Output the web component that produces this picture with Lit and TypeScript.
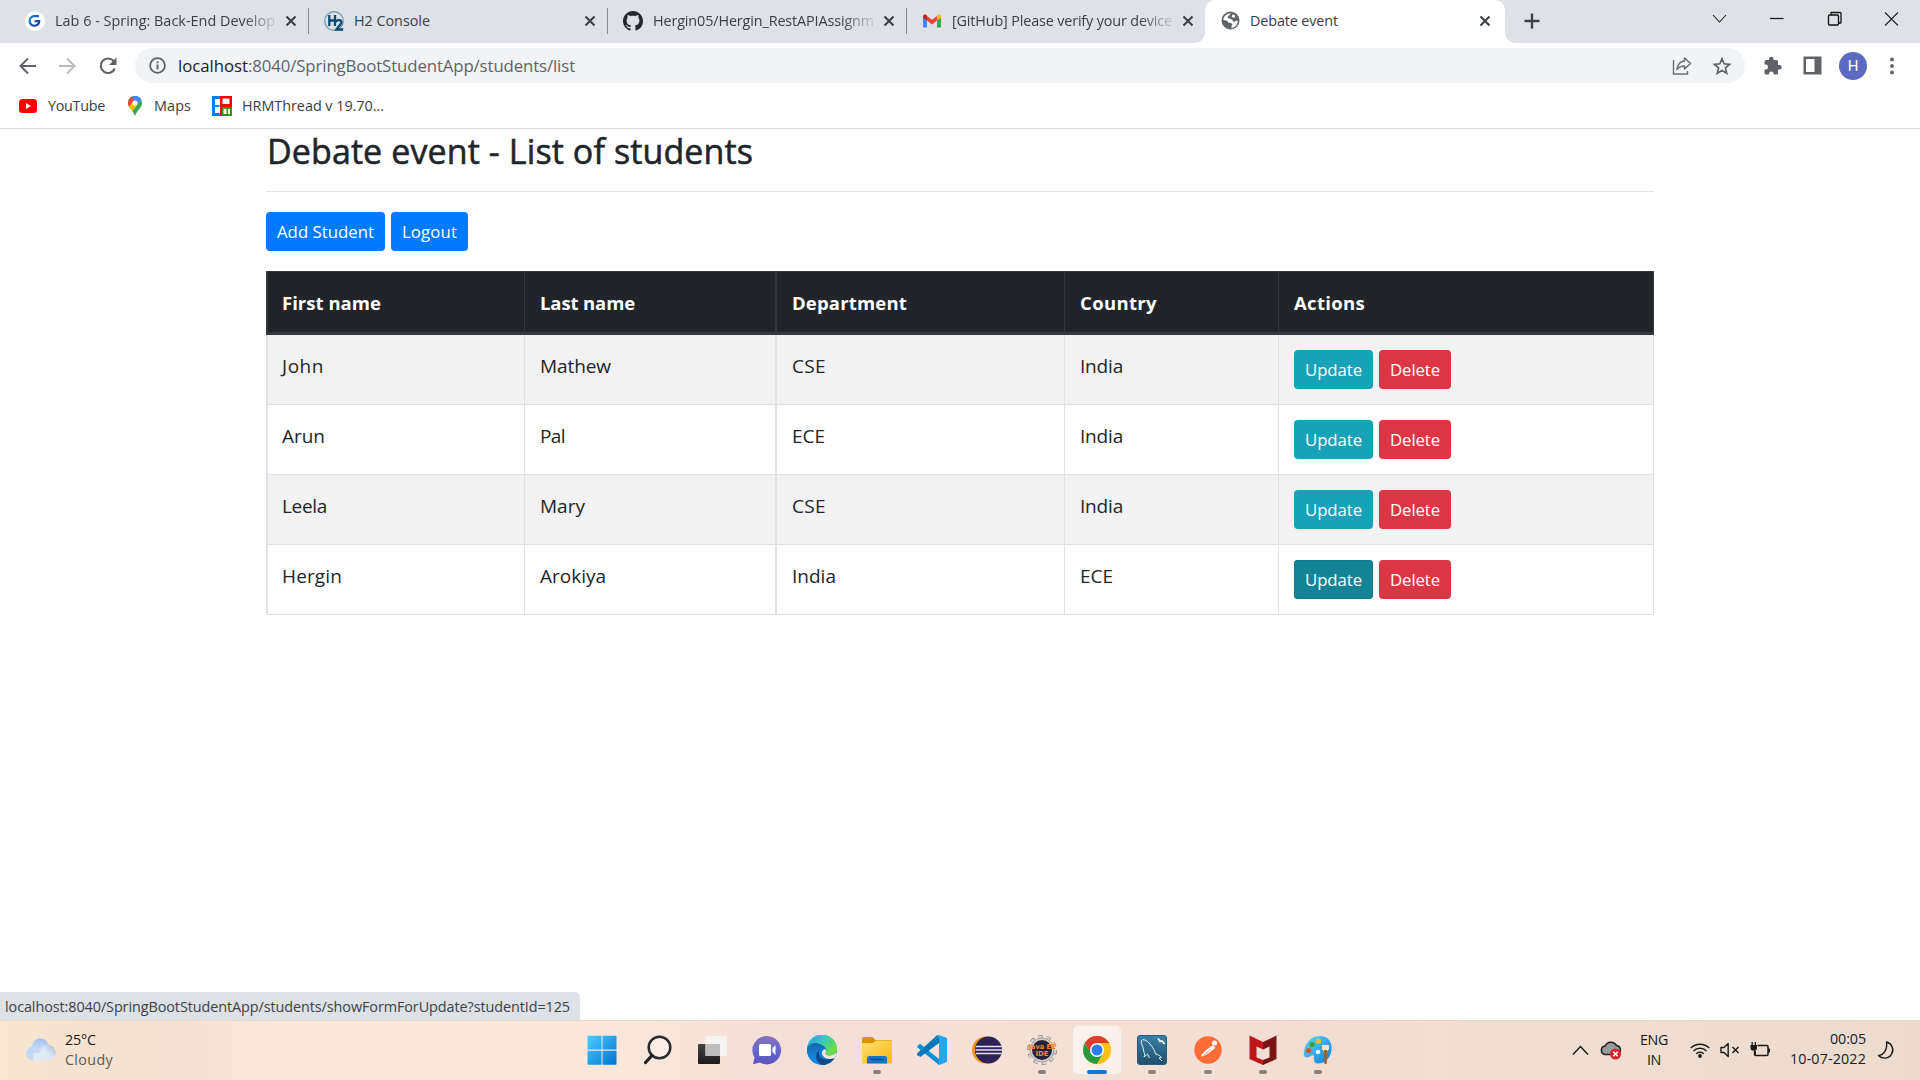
import { LitElement, html, css, svg, TemplateResult } from "lit";
import { customElement, property } from "lit/decorators.js";
import { classMap } from "lit/directives/class-map.js";

/** A single line of text whose tracking is adjusted so that it is `width` px wide. */
@customElement("fit-text")
class FitText extends LitElement {
  @property() text = "";
  @property({ type: Number }) width = 0;

  static styles = css`
    :host { display: inline-block; white-space: pre; }
    .line { display: inline-block; }
  `;

  updated() {
    const line = this.renderRoot.querySelector<HTMLElement>(".line")!;
    line.style.letterSpacing = "0px";
    const natural = line.getBoundingClientRect().width;
    if (this.width && natural) {
      line.style.letterSpacing = `${(this.width - natural) / this.text.length}px`;
    }
  }

  render() {
    return html`<span class="line">${this.text}</span>`;
  }
}

const fit = (text: string, width: number) => html`<fit-text .text=${text} .width=${width}></fit-text>`;

const icon = (w: number, h: number, body: unknown) =>
  html`<svg width=${w} height=${h} viewBox="0 0 ${w} ${h}" fill="none">${body}</svg>`;

const closeIcon = icon(12, 12, svg`<path d="M1.5 1.5l9 9M10.5 1.5l-9 9" stroke="#3c4043" stroke-width="2.1"/>`);

const favicons: Record<string, TemplateResult> = {
  lab: icon(20, 20, svg`<circle cx="10" cy="10" r="10" fill="#fff"/><path d="M14 5.2H10A4.8 4.8 0 1 0 14.2 10.2H9.6" stroke="url(#gl)" stroke-width="2.2"/><defs><linearGradient id="gl" x1="0" y1="0" x2="1" y2="1"><stop stop-color="#1d8be0"/><stop offset="1" stop-color="#1a2f9c"/></linearGradient></defs>`),
  h2: icon(20, 20, svg`<circle cx="10" cy="10" r="9.3" stroke="#6f95ad" stroke-width="1.2"/><path d="M5.3 4v11M11 4v11M5 9.5h6" stroke="#0d4a70" stroke-width="2.3"/><path d="M11.8 11.2c1-3 6-2.600 5.600.4-.3 2-3.400 4-5 6.900h6.800" stroke="#0d4a70" stroke-width="2.300"/>`),
  github: icon(20, 20, svg`<path transform="scale(1.25)" fill="#24292f" d="M8 0C3.580 0 0 3.580 0 8c0 3.540 2.290 6.530 5.470 7.590.4.070.55-.17.55-.38 0-.19-.01-.82-.01-1.490-2.010.37-2.530-.49-2.690-.94-.09-.23-.48-.94-.82-1.130-.28-.15-.68-.52-.01-.53.63-.01 1.080.58 1.230.82.72 1.210 1.870.87 2.330.66.070-.52.28-.87.51-1.070-1.780-.2-3.640-.89-3.640-3.950 0-.87.31-1.590.82-2.150-.08-.2-.36-1.020.08-2.120 0 0 .67-.21 2.200.82.64-.18 1.320-.27 2-.27s1.360.09 2 .27c1.530-1.040 2.200-.82 2.200-.82.44 1.100.16 1.920.08 2.120.51.56.82 1.270.82 2.150 0 3.070-1.870 3.750-3.650 3.950.29.25.54.73.54 1.480 0 1.070-.01 1.930-.01 2.200 0 .21.15.46.55.38A8.010 8.010 0 0 0 16 8c0-4.420-3.580-8-8-8z"/>`),
  gmail: icon(20, 20, svg`<path d="M1 6v10.500h4V9z" fill="#4285f4"/><path d="M19 6v10.500h-4V9z" fill="#34a853"/><path d="M5 9.500V5l5 3.800L15 5v4.500l-5 4z" fill="#ea4335"/><path d="M1 5.500C1 3.400 3.200 3 4.400 4L5 4.500v5L1 6.800z" fill="#c5221f"/><path d="M19 5.500C19 3.400 16.800 3 15.600 4l-.6.5v5l4-2.700z" fill="#fbbc04"/>`),
  globe: icon(19, 19, svg`<circle cx="9.500" cy="9.500" r="9" fill="#5f6368"/><path d="M10.500 2.200c-2 .2-1.200 2.200-3 2.800-1.600.5-1 2.200.5 2.500 1.700.3 3.700.7 3.800 2.400.1 1.200 1.600 1 2.700.2.700-.5 2.200-.3 2.300-.2-.1 3.400-2.800 6.600-6.200 7-.3-1.300-.1-2.200 1-3.300-.4-1.300-2-1.800-3.500-1.800-1.300 0-1.500-2-2.900-2.200L2.300 8.900c.3-3.900 3.900-7.200 8.200-6.700z" fill="#fff"/><path d="M11.500 3.400l2.400.6.300 2.200-2 .6-1.600-1.300z" fill="#fff"/>`),
};

const tabs = [
  { icon: "lab", title: "Lab 6 - Spring: Back-End Develop", width: 220 },
  { icon: "h2", title: "H2 Console", width: 76 },
  { icon: "github", title: "Hergin05/Hergin_RestAPIAssignm", width: 221 },
  { icon: "gmail", title: "[GitHub] Please verify your device", width: 220 },
];

const students = [
  [["John", 42], ["Mathew", 71], ["CSE", 34], ["India", 43]],
  [["Arun", 43], ["Pal", 25], ["ECE", 33], ["India", 43]],
  [["Leela", 45], ["Mary", 45], ["CSE", 34], ["India", 43]],
  [["Hergin", 60], ["Arokiya", 66], ["India", 44], ["ECE", 33]],
] as [string, number][][];

const head: [string, number][] = [
  ["First name", 99], ["Last name", 95], ["Department", 115], ["Country", 77], ["Actions", 71],
];

const apps: { name: string; art: unknown; running?: boolean; active?: boolean }[] = [
  { name: "start", art: svg`<defs><linearGradient id="w" x1="0" y1="0" x2="30" y2="30" gradientUnits="userSpaceOnUse"><stop stop-color="#4fd0ff"/><stop offset="1" stop-color="#0070d0"/></linearGradient></defs><path d="M.5 1.500a.7.7 0 0 1 .7-.7H14.500V14.500H.5zM15.500.8h13.300a.7.7 0 0 1 .7.7v13H15.500zM.5 15.700h14v14H1.200a.7.700 0 0 1-.7-.7zM15.500 15.700h14V29a.7.700 0 0 1-.7.700H15.500z" fill="url(#w)"/>` },
  { name: "search", art: svg`<circle cx="17.500" cy="12.500" r="10.800" stroke="#2a2a2a" stroke-width="2.500" fill="#fff" fill-opacity=".3"/><path d="M10 20.500L3.500 27.500" stroke="#222" stroke-width="3.200" stroke-linecap="round"/>` },
  { name: "task-view", art: svg`<defs><linearGradient id="tv" x1="0" y1="0" x2="0" y2="1"><stop stop-color="#454545"/><stop offset="1" stop-color="#1b1b1b"/></linearGradient></defs><rect x="1" y="9" width="22" height="20" rx="1" fill="url(#tv)"/><rect x="8.500" y="1" width="21.500" height="20" rx="1" fill="#f4f4f4" fill-opacity=".95"/><path d="M8.500 9H23v12H8.500z" fill="#bdbdbd"/>` },
  { name: "chat", art: svg`<defs><linearGradient id="ct" x1="0" y1="0" x2="0" y2="1"><stop stop-color="#8a72b8"/><stop offset=".5" stop-color="#6868cf"/><stop offset="1" stop-color="#5b52c0"/></linearGradient></defs><path d="M15 1A14.200 14.200 0 1 1 7.800 27.500L1 29.200 2.500 22.500A14.200 14.200 0 0 1 15 1z" fill="url(#ct)"/><rect x="7" y="9" width="12" height="12" rx="1.500" fill="#fff"/><path d="M20.500 13l3-3v10l-3-3z" fill="#fff"/>` },
  { name: "edge", art: svg`<defs><linearGradient id="e1" x1="0" y1="0" x2="1" y2=".5"><stop stop-color="#1b9de2"/><stop offset=".5" stop-color="#35c7c9"/><stop offset="1" stop-color="#6be03f"/></linearGradient><linearGradient id="e2" x1="0" y1="0" x2="0" y2="1"><stop stop-color="#1768b0"/><stop offset="1" stop-color="#1592e6"/></linearGradient></defs><circle cx="15" cy="15" r="15" fill="#0d7bd2"/><path d="M.3 12A15 15 0 0 1 30 13c.3 5-3.500 7.700-8 7.400-3-.2-4-1.400-3.200-2.600C21 14 17 9.500 11 9.500 5.500 9.500 1.500 11 .3 12z" fill="url(#e1)"/><path d="M.1 14C1.500 9 7 7 11.500 8.400c3.500 1.100 6 3 6.500 5.600-6-3-8 5-2 9 3 2 7 2.300 11.300.500C24 28.500 19 30.500 13.500 29.800 5 29-.5 21.500.1 14z" fill="url(#e2)"/><path d="M12.300 15.500c-2 6.500 3.500 11.500 14 7.500l1.400-.3C25 27 20 30 15 30 8 27 7.500 18.500 12.300 15.500z" fill="#114a8b"/><path d="M18.800 17.800c-1 1.500 1 2.600 3.200 2.600 3 .1 5-.8 6.300-2.200L30 17l-1.800 5.700c-5 2.300-10 1.300-12.200-1.700-2-2.700-1-6 2-7 .9.800 1.500 2.500.8 3.800z" fill="#f5e3da"/>` },
  { name: "explorer", running: true, art: svg`<defs><linearGradient id="ex" x1="0" y1="0" x2="1" y2="1"><stop stop-color="#ffdf72"/><stop offset="1" stop-color="#f9b90f"/></linearGradient></defs><path d="M0 3.500Q0 2 1.500 2H9.500q1 0 1.800.8L13.500 5H29q1 0 1 1v8H0z" fill="#d99400"/><path d="M0 8h11l3-2.500H29q1 0 1 1V27.500q0 1-1 1H1q-1 0-1-1z" fill="url(#ex)"/><path d="M5 28.500V23.500q0-2.500 2.500-2.500h15q2.500 0 2.500 2.500v5z" fill="#0f75d0"/><path d="M8.500 24.500h13" stroke="#174a85" stroke-width="1.500"/>` },
  { name: "vscode", art: svg`<path d="M22 0.500L3 19.500.6 21 0 19 .5 18 20 .3z" fill="#0877b9"/><path d="M0 11.500L3 8.800 22 24v6L.5 12.500z" fill="#0b8fd6"/><path d="M22 8L3.200 22 .3 19.600 22 1z" fill="#0877b9"/><path d="M22 0l8 3v24l-8 3z" fill="#27a4f2"/>` },
  { name: "eclipse", art: svg`<circle cx="13.500" cy="15" r="13.500" fill="#f7941e"/><circle cx="16.500" cy="15" r="13.500" fill="#2c2255"/><path d="M4 11.500h25.500M3.500 15h26.500M4 18.500h25.500" stroke="#e6e3f0" stroke-width="1.700"/>` },
  { name: "java-ee", running: true, art: svg`<circle cx="15" cy="15" r="13" stroke="#77736f" stroke-width="4" stroke-dasharray="4.100 4.068"/><circle cx="15" cy="15" r="13" stroke="#d6d6d4" stroke-width="3" stroke-dasharray="3.500 4.668"/><circle cx="15" cy="15" r="12" fill="#d0cfce" stroke="#777" stroke-width=".5"/><circle cx="15" cy="15" r="10" fill="#292137"/><text x="15" y="14" class="javatext" textLength="27" lengthAdjust="spacingAndGlyphs">Java EE</text><text x="15" y="20.500" class="javatext">IDE</text>` },
  { name: "chrome", running: true, active: true, art: svg`<g transform="translate(1 1)"><circle cx="14" cy="14" r="14" fill="#fbc116"/><path d="M14 14L1.900 7A14 14 0 0 1 26.100 7z" fill="#e33b2e"/><path d="M14 7h12.100A14 14 0 0 0 1.900 7L8 17.500z" fill="#e33b2e"/><path d="M1.900 7A14 14 0 0 0 14 28l6-10.500H8z" fill="#249a41"/><path d="M26.100 7H14l6 10.500L14 28A14 14 0 0 0 26.100 7z" fill="#fbc116"/><circle cx="14" cy="14" r="7" fill="#fff"/><circle cx="14" cy="14" r="5.500" fill="#2f7bea"/></g>` },
  { name: "mysql", running: true, art: svg`<defs><linearGradient id="my" x1="0" y1="0" x2="0" y2="1"><stop stop-color="#3b7ea6"/><stop offset="1" stop-color="#1f4f6c"/></linearGradient></defs><rect x=".5" y=".5" width="29" height="29" rx="2.500" fill="url(#my)" stroke="#265d7d"/><path d="M7 22c1.500-2 0-4-.5-7C6 11 3.500 8 4.500 5.500c1.500-2 5.500 0 8.500 3.500 3 3.500 5 7 5.500 10 3 .5 5.500 2.500 6 3.500l-2.500.500 3 3M7 22l3.500-3 2 4" stroke="#e3eef5" stroke-width="1"/><path d="M21 3.500l2 3 2-.5 2.500 3" stroke="#fff" stroke-width="1.800"/>` },
  { name: "postman", running: true, art: svg`<circle cx="15" cy="15" r="13.700" fill="#ff6c37"/><circle cx="21.500" cy="8" r="2.600" fill="#fff"/><path d="M20 10.500l2.500 2.300-9 7-4.500 2-1-1 3-4 6.500-5z" fill="#fff"/><path d="M8.500 22.500L18 14" stroke="#ff6c37" stroke-width=".7"/>` },
  { name: "mcafee", running: true, art: svg`<path d="M1.500.5L15 7v7.500l-6.500-3v11L15 25v5L1.500 24z" fill="#c01818"/><path d="M28.500.5L15 7v7.500l6.500-3v11L15 25v5l13.500-6z" fill="#7d1414"/>` },
  { name: "paint", running: true, art: svg`<defs><linearGradient id="pt" x1="0" y1="0" x2="1" y2="1"><stop stop-color="#5ed9fb"/><stop offset="1" stop-color="#0b7ed5"/></linearGradient></defs><path d="M17 1c8 0 12.500 6 11.500 14C27.500 24 20 29.500 14 28.500c-4-.7-2.500-4.500-3-7-.7-2.800-3.300-.5-5.500.5C2 23.500 0 21 1 16 2.500 7 9 1 17 1z" fill="url(#pt)"/><circle cx="9" cy="9.500" r="2.600" fill="#38a31c"/><circle cx="15.500" cy="6" r="2.600" fill="#f8bd1b"/><circle cx="5.500" cy="15.500" r="2.600" fill="#dd5125"/><circle cx="15" cy="17" r="2.300" fill="#e9f4fa"/><path d="M19 10h7v4l-1.500 2h-4L19 14z" fill="#f3e6d2"/><path d="M21 15h3l-.3 14h-2.400z" fill="#9b642b"/>` },
];

@customElement("app-root")
class AppRoot extends LitElement {
  static styles = css`
    :host {
      display: block;
      font-family: "Open Sans", "Noto Sans", sans-serif;
      color: #212529;
    }
    svg { display: block; flex: none; }
    .screen { width: 1920px; height: 1080px; display: flex; flex-direction: column; background: #fff; overflow: hidden; }

    .tabstrip { display: flex; height: 43px; padding-left: 10px; background: #dee1e6; font-size: 14.400px; line-height: 20px; color: #3c4043; }
    .tab { display: flex; flex: none; align-items: center; width: 299px; height: 41px; box-sizing: border-box; padding-left: 15px; }
    .tab .title { flex: none; width: 223px; margin-left: 10px; overflow: hidden; white-space: nowrap; }
    .tab .title.long { -webkit-mask-image: linear-gradient(to right, #000 188px, transparent 225px); mask-image: linear-gradient(to right, #000 188px, transparent 225px); }
    .tab .close { margin-left: 7px; }
    .tab .sep { width: 1px; height: 26px; background: #85888c; margin-left: auto; }
    .tab.last .sep { background: transparent; }
    .tab.active { position: relative; width: 300px; height: 43px; padding: 0 0 2px 16px; margin-left: -1px; background: #fff; border-radius: 10px 10px 0 0; }
    .tab.active .title { width: 228px; margin-left: 10px; }
    .tab.active .close { margin-left: 1px; }
    .tab.active::before, .tab.active::after { content: ""; position: absolute; bottom: 0; width: 10px; height: 10px; }
    .tab.active::before { left: -10px; background: radial-gradient(circle at 0 0, transparent 9.500px, #fff 10px); }
    .tab.active::after { right: -10px; background: radial-gradient(circle at 100% 0, transparent 9.500px, #fff 10px); }
    .newtab { margin: 13px 0 0 19px; }
    .window { display: flex; margin-left: auto; margin-top: 10px; gap: 40.500px; padding-right: 20px; }

    .toolbar { display: flex; align-items: center; height: 45px; padding: 0 0 0 18px; }
    .nav { display: flex; gap: 20px; }
    .omnibox { display: flex; align-items: center; box-sizing: border-box; width: 1610px; height: 35px; margin: 0 18px 0 17px; padding: 0 13px 0 14px; border-radius: 18px; background: #f1f3f4; font-size: 16.800px; line-height: 24px; color: #5f6368; }
    .url { flex: 1; margin-left: 12px; white-space: nowrap; }
    .host { color: #202124; }
    .omni-actions { display: flex; gap: 20px; }
    .panel { margin-left: 20px; }
    .avatar { width: 28px; height: 28px; border-radius: 50%; background: #5c6bc0; color: #fff; font: 15px/28px Roboto, sans-serif; text-align: center; margin: 0 22px 0 17px; }
    .bookmarks { display: flex; align-items: center; height: 41px; box-sizing: border-box; padding: 0 0 4px 18px; border-bottom: 1px solid #dadce0; font-size: 14.400px; line-height: 20px; color: #3c4043; }
    .bookmarks .label { margin-left: 10px; margin-right: 21px; }

    .page { flex: 1; display: flex; flex-direction: column; justify-content: space-between; min-height: 0; }
    .container { width: 1388px; margin: 0 266px; }
    h3 { margin: 0; padding-left: 1px; height: 42px; font-size: 34px; line-height: 44px; font-weight: 400; -webkit-text-stroke: 0.550px #212529; }
    .rule { height: 1px; background: #e5e5e5; margin: 20px 0; }
    .actions { display: flex; gap: 6px; }
    .btn { display: inline-flex; box-sizing: border-box; height: 39px; align-items: center; justify-content: center; border-radius: 4px; color: #fff; font-size: 16.800px; line-height: 26px; }
    .primary { background: #007bff; padding-top: 1px; }
    .add { width: 119px; }
    .logout { width: 77px; }
    .update { width: 79px; background: #17a2b8; }
    .update.hover { background: #138496; box-shadow: inset 0 0 0 1px #117a8b; }
    .delete { width: 72px; background: #dc3545; }
    .table { margin-top: 20px; border-right: 1px solid #dee2e6; box-sizing: border-box; font-size: 19px; line-height: 30px; }
    .tr { display: grid; grid-template-columns: 258px 251px 289px 214px 375px; }
    .td { box-sizing: border-box; height: 70px; padding: 16px 0 0 15px; border-left: 1px solid #dee2e6; border-bottom: 1px solid #dee2e6; }
    .td:first-child { border-left-width: 2px; padding-left: 14px; }
    .td:nth-child(3) { border-left-width: 2px; }
    .td.buttons { display: flex; gap: 6px; padding-top: 15px; }
    .odd .td { background: #f2f2f2; }
    .thead { margin-right: -1px; border-right: 1px solid #32383e; border-top: 1px solid #32383e; color: #fff; font-weight: 700; font-size: 18.500px; }
    .thead .td { height: 63px; background: #212529; border-color: #32383e; border-bottom-width: 3px; }

    .status { width: 580px; height: 28px; box-sizing: border-box; padding: 4px 0 0 5px; background: #dee1e6; border-top-right-radius: 5px; font-size: 14.400px; line-height: 22px; color: #3c4043; }

    .taskbar { display: flex; align-items: center; height: 60px; box-shadow: inset 0 1px #e6d8cd; background: linear-gradient(90deg, #f7e6d0 0, #f3e0d0 170px, #fbe8d8 270px, #fce8da 500px, #fbe8db 600px, #f3dfd8 790px, #f5e1d8 960px, #f3ddd3 1340px, #efded1 1600px, #eddccd 1920px); }
    .weather { width: 555px; padding-left: 26px; display: flex; gap: 9px; align-items: center; font-size: 14.300px; line-height: 20px; color: #1c1a18; }
    .weather .sub { color: #5f5952; }
    .stack { display: flex; flex-direction: column; }
    .apps { display: flex; gap: 7.050px; margin-left: -3px; }
    .app { position: relative; width: 48px; height: 48px; display: flex; align-items: center; justify-content: center; border-radius: 5px; }
    .app.active { background: #faf1ec; box-shadow: 0 0 0 1px #eee2db; }
    .dot { position: absolute; bottom: 0; left: 20px; width: 8px; height: 4px; border-radius: 2px; background: #8b817b; }
    .app.active .dot { left: 14px; width: 20px; background: #0a78d4; }
    .javatext { font: 700 7px "DejaVu Sans", sans-serif; fill: #e8892b; text-anchor: middle; }
    .tray { display: flex; align-items: center; margin-left: auto; padding-right: 25px; font-size: 14.300px; line-height: 20px; color: #1c1a18; }
    .onedrive { margin-left: 11px; }
    .tray .lang { align-items: center; margin: 0 22px 0 18px; }
    .tray .status-icons { display: flex; align-items: center; gap: 10px; }
    .tray .clock { align-items: flex-end; margin: -2px 11px 0 19px; }
  `;

  private renderTabs() {
    return html`<div class="tabstrip">
      ${tabs.map((t, i) => html`<div class=${classMap({ tab: true, last: i === tabs.length - 1 })}>
        ${favicons[t.icon]}
        <div class=${classMap({ title: true, long: t.width > 200 })}>${fit(t.title, t.width)}</div>
        <div class="close">${closeIcon}</div><div class="sep"></div>
      </div>`)}
      <div class="tab active">${favicons.globe}<div class="title">${fit("Debate event", 88)}</div><div class="close">${closeIcon}</div></div>
      <div class="newtab">${icon(16, 16, svg`<path d="M8 .5v15M.5 8h15" stroke="#3c4043" stroke-width="2.300"/>`)}</div>
      <div class="window">
        ${icon(17, 18, svg`<path d="M2 5l6.500 7L15 5" stroke="#222" stroke-width="1.100"/>`)}
        ${icon(17, 18, svg`<path d="M2 8.500h13.500" stroke="#111" stroke-width="1.200"/>`)}
        ${icon(17, 18, svg`<rect x="2.500" y="5" width="10" height="10" rx="1" stroke="#111" stroke-width="1.300"/><path d="M5 4.500V3q0-.5.500-.5H14q1 0 1 1v9q0 .5-.5.500h-1.500" stroke="#111" stroke-width="1.300"/>`)}
        ${icon(17, 18, svg`<path d="M2 2.500l13 13M15 2.500l-13 13" stroke="#222" stroke-width="1.100"/>`)}
      </div>
    </div>`;
  }

  private renderToolbar() {
    return html`<div class="toolbar">
      <div class="nav">
        ${icon(20, 20, svg`<path d="M18 10H3M10 2.500L2.500 10l7.500 7.500" stroke="#5f6368" stroke-width="2"/>`)}
        ${icon(20, 20, svg`<path d="M1 10h15M9 2.500l7.500 7.500L9 17.500" stroke="#babcbe" stroke-width="2"/>`)}
        ${icon(20, 20, svg`<path d="M15.600 5A7.300 7.300 0 1 0 16.800 12.500" stroke="#5f6368" stroke-width="2.100"/><path d="M18.500 1.500V9H11z" fill="#5f6368"/>`)}
      </div>
      <div class="omnibox">
        ${icon(17, 17, svg`<circle cx="8.500" cy="8.500" r="7.400" stroke="#5f6368" stroke-width="1.800"/><path d="M8.500 7.500v5M8.500 4.200v2" stroke="#5f6368" stroke-width="1.900"/>`)}
        <div class="url"><span class="host">${fit("localhost", 70)}</span>${fit(":8040/SpringBootStudentApp/students/list", 327)}</div>
        <div class="omni-actions">
          ${icon(20, 20, svg`<path d="M1.500 4v14H15.500v-3" stroke="#6a6e72" stroke-width="1.400"/><path d="M12.500 2l6 5.500-6 5.500v-3c-3.500 0-5.500 1-7.500 3.500.5-4.500 3-8 7.500-8.500z" stroke="#6a6e72" stroke-width="1.500" stroke-linejoin="round"/>`)}
          ${icon(20, 20, svg`<path d="M10 2.800l2.100 5 5.500.500-4.200 3.600 1.300 5.300L10 14.400l-4.700 2.800 1.300-5.300L2.400 8.300l5.500-.5z" stroke="#5f6368" stroke-width="1.700"/>`)}
        </div>
      </div>
      ${icon(20, 20, svg`<path d="M16.500 9H15V5.500Q15 4 13.500 4H10.500V3A2.200 2.200 0 0 0 6 3v1H3Q1.500 4 1.500 5.500v3H2.500a2.500 2.500 0 0 1 0 5h-1V17q0 1.500 1.500 1.500H6v-1a2.400 2.400 0 0 1 4.700 0v1h3Q15 18.500 15 17v-3.500h1.500A2.200 2.200 0 0 0 16.500 9z" fill="#5f6368"/>`)}
      <div class="panel">${icon(19, 19, svg`<path d="M.5.500h18v18H.5zM3 3v13h8.500V3z" fill-rule="evenodd" fill="#5f6368"/>`)}</div>
      <div class="avatar">H</div>
      ${icon(6, 18, svg`<circle cx="3" cy="2.500" r="1.900" fill="#5f6368"/><circle cx="3" cy="9" r="1.900" fill="#5f6368"/><circle cx="3" cy="15.500" r="1.900" fill="#5f6368"/>`)}
    </div>
    <div class="bookmarks">
      ${icon(20, 20, svg`<rect x="1" y="3" width="18" height="14" rx="3.500" fill="#f00"/><path d="M8 7l5 3-5 3z" fill="#fff"/>`)}
      <span class="label">${fit("YouTube", 57)}</span>
      ${icon(18, 20, svg`<defs><clipPath id="pin"><path d="M9 0a7 7 0 0 1 7 7c0 4.500-4.500 6.500-7 13C6.500 13.500 2 11.500 2 7a7 7 0 0 1 7-7z"/></clipPath></defs><g clip-path="url(#pin)"><rect width="18" height="20" fill="#34a853"/><path d="M0 0h18L9 7z" fill="#4285f4"/><path d="M0 0h6l3 7-6 4H0z" fill="#ea4335"/><path d="M2 12l7-9 3 5-7 9z" fill="#fbbc04"/><path d="M7 0h11v3L9 9z" fill="#4285f4"/></g><circle cx="9" cy="7" r="2.600" fill="#fff"/>`)}
      <span class="label">${fit("Maps", 37)}</span>
      ${icon(20, 20, svg`<path d="M0 0h9v20H0z" fill="#0a7cff"/><path d="M3 3h5v6H3zM3 11h5v6H3z" fill="#fff"/><path d="M8 2.500v15" stroke="#fff" stroke-width="1"/><path d="M8 0h12v11H8z" fill="#f00"/><path d="M10.500 2.500h7V8h-7z" fill="#fff"/><path d="M8 11h2v9H8z" fill="#f00"/><path d="M10 11h10v9H10z" fill="#3a930c"/><path d="M11.500 13h3v5h-3zM16 13h2v5h-2z" fill="#fff"/>`)}
      <span class="label">${fit("HRMThread v 19.70...", 142)}</span>
    </div>`;
  }

  private renderPage() {
    return html`<div class="page">
      <div class="container">
        <h3>${fit("Debate event - List of students", 486)}</h3>
        <div class="rule"></div>
        <div class="actions">
          <div class="btn primary add">${fit("Add Student", 97)}</div>
          <div class="btn primary logout">${fit("Logout", 55)}</div>
        </div>
        <div class="table">
          <div class="tr thead">${head.map(([t, w]) => html`<div class="td">${fit(t, w)}</div>`)}</div>
          ${students.map((row, i) => html`<div class=${classMap({ tr: true, odd: i % 2 === 0 })}>
            ${row.map(([t, w]) => html`<div class="td">${fit(t, w)}</div>`)}
            <div class="td buttons">
              <div class=${classMap({ btn: true, update: true, hover: i === 3 })}>${fit("Update", 57)}</div>
              <div class="btn delete">${fit("Delete", 50)}</div>
            </div>
          </div>`)}
        </div>
      </div>
      <div class="status">${fit("localhost:8040/SpringBootStudentApp/students/showFormForUpdate?studentId=125", 565)}</div>
    </div>`;
  }

  private renderTaskbar() {
    return html`<div class="taskbar">
      <div class="weather">
        ${icon(30, 24, svg`<defs><linearGradient id="c1" x1="0" y1="0" x2="0" y2="1"><stop stop-color="#9ebfee"/><stop offset="1" stop-color="#e3edf9"/></linearGradient><linearGradient id="c2" x1="1" y1="0" x2="0" y2="1"><stop stop-color="#9fb6d3"/><stop offset=".5" stop-color="#dce8f5"/><stop offset="1" stop-color="#e6eef8"/></linearGradient></defs><circle cx="14.500" cy="9" r="8.500" fill="url(#c1)"/><circle cx="7" cy="15.500" r="7" fill="#c3d7f2"/><path d="M7 15h15v7.500H7z" fill="#dfe9f6"/><circle cx="22" cy="14.800" r="7.700" fill="url(#c2)"/>`)}
        <div class="stack"><span>${fit("25°C", 31)}</span><span class="sub">${fit("Cloudy", 48)}</span></div>
      </div>
      <div class="apps">
        ${apps.map((a) => html`<div class=${classMap({ app: true, active: !!a.active })}>
          ${icon(30, 30, a.art)}
          ${a.running ? html`<span class="dot"></span>` : null}
        </div>`)}
      </div>
      <div class="tray">
        ${icon(17, 12, svg`<path d="M1 10.500l7.500-8 7.500 8" stroke="#1c1a18" stroke-width="1.500"/>`)}
        <div class="onedrive">${icon(22, 20, svg`<path d="M5 14.500a4.300 4.300 0 0 1 0-8.500A6.500 6.500 0 0 1 16.500 5.500 4.600 4.600 0 0 1 17 14.500z" fill="#9b9b9b" stroke="#222" stroke-width="1.500"/><circle cx="15.500" cy="14" r="5.500" fill="#d9232e"/><path d="M13.300 11.800l4.400 4.400M17.700 11.800l-4.400 4.400" stroke="#fff" stroke-width="1.500"/>`)}</div>
        <div class="stack lang">${fit("ENG", 28)}${fit("IN", 14)}</div>
        <div class="status-icons">
          ${icon(20, 18, svg`<path d="M.8 7a13 13 0 0 1 18.400 0M3.500 10a9.200 9.200 0 0 1 13 0M6.200 12.700a5.400 5.400 0 0 1 7.600 0" stroke="#1c1a18" stroke-width="1.500"/><circle cx="10" cy="15" r="1.900" fill="#1c1a18"/>`)}
          ${icon(20, 16, svg`<path d="M1 5.500h3L8.200 1.500v13L4 10.500H1z" stroke="#1c1a18" stroke-width="1.400" stroke-linejoin="round"/><path d="M12.500 5l6 6M18.500 5l-6 6" stroke="#1c1a18" stroke-width="1.400"/>`)}
          ${icon(21, 18, svg`<path d="M7.500 4.500H17q1 0 1 1v8q0 1-1 1H6q-.8 0-.8-.8V10" stroke="#1c1a18" stroke-width="1.500"/><path d="M18 7.500h2v4h-2z" fill="#1c1a18"/><path d="M.5 4h6.500v3q0 2.500-2 2.500H2.500Q.5 9.500.5 7zM1.500 1h1.300v3H1.500zM4.700 1H6v3H4.700z" fill="#1c1a18"/><path d="M4.500 9v5.500" stroke="#1c1a18" stroke-width="1.300"/>`)}
        </div>
        <div class="stack clock">${fit("00:05", 36)}${fit("10-07-2022", 76)}</div>
        ${icon(18, 20, svg`<path d="M9.500 2a8.200 8.200 0 1 1-8 13.500C7 15 10.500 9.500 9.500 2z" stroke="#1c1a18" stroke-width="1.400" stroke-linejoin="round"/>`)}
      </div>
    </div>`;
  }

  render() {
    return html`<div class="screen">${this.renderTabs()}${this.renderToolbar()}${this.renderPage()}${this.renderTaskbar()}</div>`;
  }
}
